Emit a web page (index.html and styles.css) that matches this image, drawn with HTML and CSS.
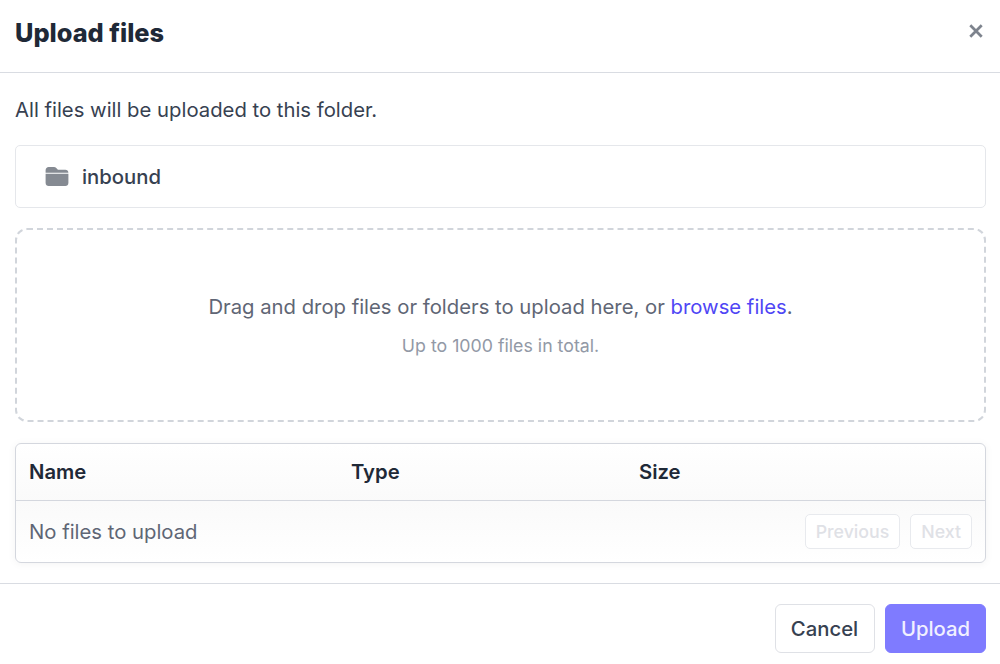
FILE: index.html
```html
<!DOCTYPE html>
<html lang="en">
<head>
<meta charset="utf-8">
<title>Upload files</title>
<link rel="stylesheet" href="styles.css">
</head>
<body>
<div class="modal">
  <header class="head">
    <h1 class="title">Upload files</h1>
    <svg class="close" viewBox="0 0 14 14" aria-hidden="true"><path d="M2 2l10 10M12 2L2 12"/></svg>
  </header>
  <main class="body">
    <p class="intro">All files will be uploaded to this folder.</p>
    <div class="folder">
      <svg class="folder-icon" viewBox="0 0 24 20" aria-hidden="true">
        <path d="M0 3.500C0 1.600 1.400 0 3.200 0h5.600c1 0 1.800.4 2.400 1.100L13 3h7.800C22.600 3 24 4.300 24 6H0z"/>
        <path d="M0 7.200h24v9.600c0 1.800-1.400 3.200-3.200 3.200H3.200C1.400 20 0 18.600 0 16.800z"/>
      </svg>
      <span class="folder-name">inbound</span>
    </div>
    <div class="drop">
      <p class="drop-main">Drag and drop files or folders to upload here, or <a class="link">browse files</a>.</p>
      <p class="drop-sub">Up to 1000 files in total.</p>
    </div>
    <div class="table">
      <div class="thead">
        <div class="col col-name">Name</div>
        <div class="col col-type">Type</div>
        <div class="col">Size</div>
      </div>
      <div class="tfoot">
        <span class="empty">No files to upload</span>
        <div class="pager">
          <button class="page-btn">Previous</button>
          <button class="page-btn">Next</button>
        </div>
      </div>
    </div>
  </main>
  <footer class="foot">
    <button class="btn btn-cancel">Cancel</button>
    <button class="btn btn-upload">Upload</button>
  </footer>
</div>
</body>
</html>
```
FILE: styles.css
```css
* { box-sizing: border-box; }
html, body { margin: 0; padding: 0; }
body {
  width: 1000px;
  height: 664px;
  overflow: hidden;
  background: #fff;
  font-family: Inter, "Liberation Sans", sans-serif;
  color: #374151;
}
p, h1 { margin: 0; }
.modal { display: flex; flex-direction: column; height: 664px; }
.head {
  height: 73px;
  flex: none;
  display: flex;
  align-items: center;
  justify-content: space-between;
  padding: 0 16px 7px 15px;
  border-bottom: 1px solid #d9dce2;
}
.title { font-size: 25.350px; font-weight: 800; color: #1f2937; line-height: 28px; }
.close { width: 16px; height: 16px; margin-top: -4px; }
.close path { stroke: #7d838d; stroke-width: 2.400; fill: none; }
.body { flex: none; height: 511px; padding: 0 14px 0 15px; border-bottom: 1px solid #d9dce2; }
.intro { font-size: 20.300px; line-height: 28px; margin-top: 23px; color: #374151; }
.folder {
  height: 63px;
  margin-top: 21px;
  display: flex;
  align-items: center;
  padding-left: 29px;
  border: 1px solid #e5e7eb;
  border-radius: 5px;
}
.folder-icon { width: 24px; height: 19px; fill: #858a92; margin-right: 13px; }
.folder-name { font-size: 20.300px; font-weight: 500; color: #374151; }
.drop {
  height: 194px;
  margin-top: 20px;
  border: 2px dashed #d1d5db;
  border-radius: 12px;
  display: flex;
  flex-direction: column;
  align-items: center;
  padding-top: 63px;
}
.drop-main { font-size: 20.300px; line-height: 28px; color: #5f6675; }
.link { color: #4f46f5; }
.drop-sub { font-size: 17.750px; line-height: 24px; margin-top: 13px; color: #9299a6; }
.table {
  height: 120px;
  margin-top: 21px;
  border: 1px solid #d4d7de;
  border-radius: 6px;
  box-shadow: 0 1px 8px rgba(0, 0, 0, .05);
  background: linear-gradient(#fff 0, #fafafa 50%, #fff 100%);
  overflow: hidden;
}
.thead {
  height: 57px;
  display: flex;
  align-items: center;
  padding: 0 0 2px 13px;
  border-bottom: 1px solid #d4d7de;
  font-size: 20.300px;
  font-weight: 600;
  color: #1f2937;
}
.col-name { width: 322px; }
.col-type { width: 288px; }
.tfoot {
  height: 61px;
  display: flex;
  align-items: center;
  justify-content: space-between;
  padding: 0 13px;
}
.empty { font-size: 20.300px; color: #5f6675; }
.pager { display: flex; gap: 10px; }
.page-btn {
  height: 35px;
  padding: 0 10px;
  font: 500 17.750px Inter, "Liberation Sans", sans-serif;
  color: #dfe1e6;
  background: #fff;
  border: 1px solid #e8eaee;
  border-radius: 5px;
}
.foot {
  flex: 1;
  display: flex;
  justify-content: flex-end;
  align-items: flex-start;
  gap: 10.500px;
  padding: 20px 14px 0 0;
}
.btn {
  height: 48.500px;
  font: 500 20.300px Inter, "Liberation Sans", sans-serif;
  border-radius: 6px;
  padding: 1px 0 0;
}
.btn-cancel { width: 100px; background: #fff; color: #374151; border: 1.500px solid #dfe1e6; }
.btn-upload { width: 101px; background: #7f7bff; color: #f1f0ff; border: 1px solid #7f7bff; }
```
